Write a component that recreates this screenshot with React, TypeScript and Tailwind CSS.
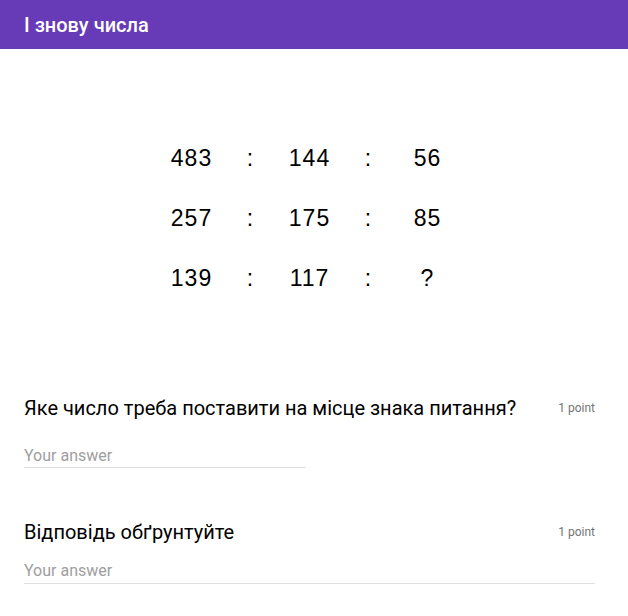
const rows = [
  ["483", "144", "56"],
  ["257", "175", "85"],
  ["139", "117", "?"],
];

function Question({ title, wide }: { title: string; wide?: boolean }) {
  return (
    <section className="px-6">
      <div className="flex items-center justify-between pr-[9px]">
        <h2 className="text-[20px] leading-6 text-black">{title}</h2>
        <span className="text-[12px] text-[#757575]">1 point</span>
      </div>
      <div className={wide ? "mt-[15px] mr-[9px]" : "mt-[24px] w-[282px]"}>
        <input
          placeholder="Your answer"
          className={
            "w-full border-b border-[#e0e0e0] text-[16px] leading-5 outline-none placeholder:text-[#9e9e9e] " +
            (wide ? "pb-[2px]" : "pb-[1px]")
          }
        />
      </div>
    </section>
  );
}

export default function App() {
  return (
    <div className="min-h-[616px] bg-white font-['Roboto',sans-serif]">
      <header className="flex h-[49px] items-center bg-[#673ab7] px-6">
        <h1 className="text-[20px] font-medium text-white">І знову числа</h1>
      </header>

      <main className="pt-[79px]">
        <div className="ml-[162px] grid w-[295px] grid-cols-5 font-['Liberation_Sans',sans-serif] text-[23px] tracking-[1px] text-black">
          {rows.map((r, i) => (
            <div key={i} className="contents">
              <span className="flex h-[60px] items-center justify-center">{r[0]}</span>
              <span className="flex h-[60px] items-center justify-center">:</span>
              <span className="flex h-[60px] items-center justify-center">{r[1]}</span>
              <span className="flex h-[60px] items-center justify-center">:</span>
              <span className="flex h-[60px] items-center justify-center">{r[2]}</span>
            </div>
          ))}
        </div>

        <div className="mt-[88px] flex flex-col gap-[52px]">
          <Question title="Яке число треба поставити на місце знака питання?" />
          <Question title="Відповідь обґрунтуйте" wide />
        </div>
      </main>
    </div>
  );
}
